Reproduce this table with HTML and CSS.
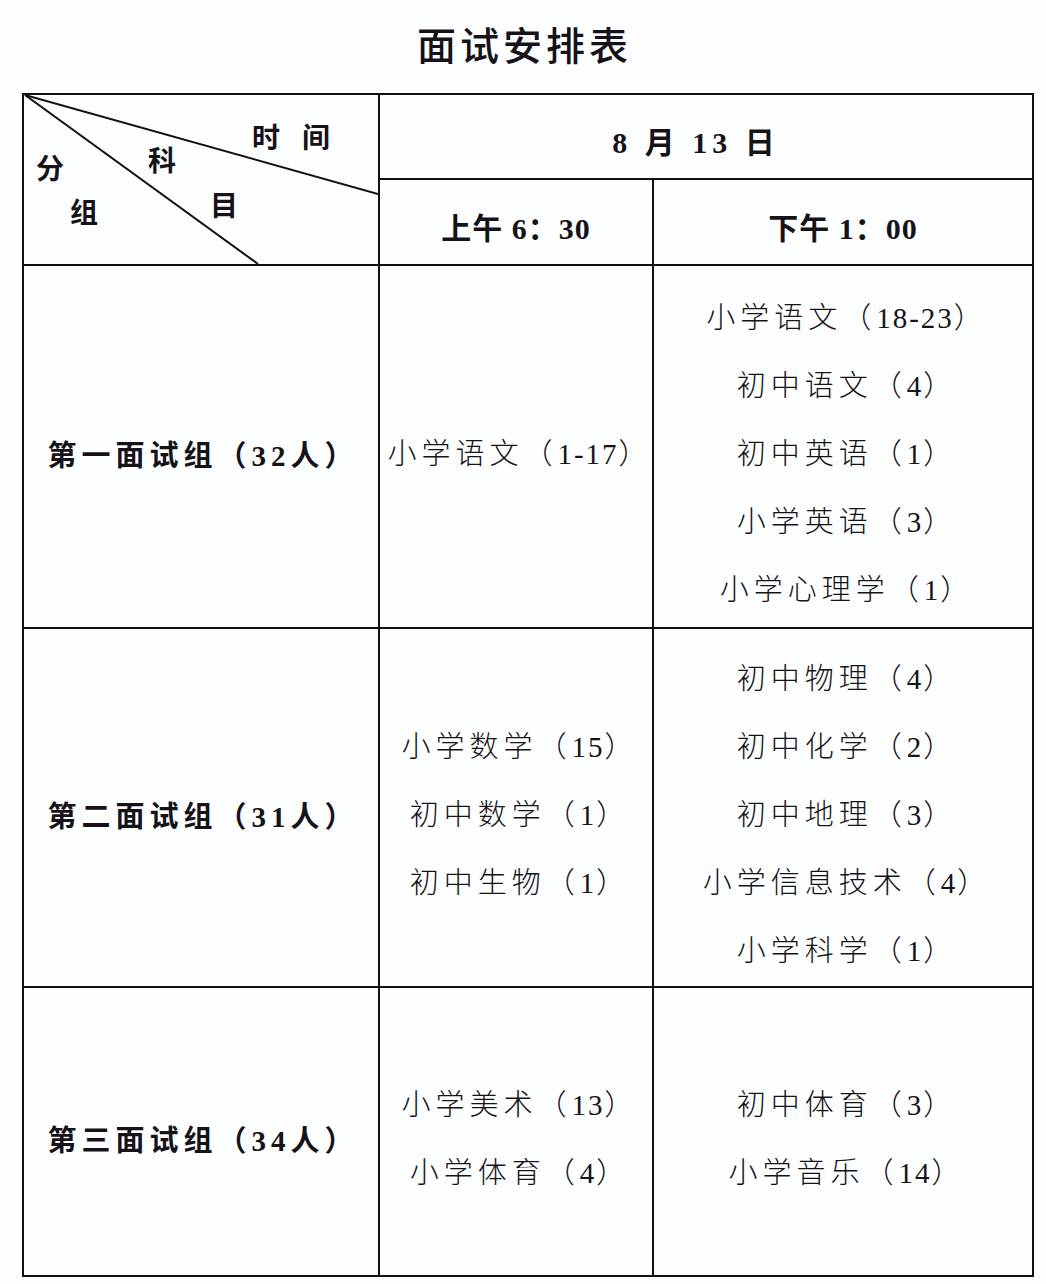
FILE: index.html
```html
<!DOCTYPE html>
<html lang="zh-CN">
<head>
<meta charset="utf-8">
<title>面试安排表</title>
<link rel="stylesheet" href="styles.css">
</head>
<body>
<h1 class="title">面试安排表</h1>
<div class="table">
  <div class="cell corner">
    <svg class="diag" viewBox="0 0 354 169" preserveAspectRatio="none" aria-hidden="true">
      <path d="M1 0 L354 99" />
      <path d="M1 0 L234 169" />
    </svg>
    <span class="hd hd-time">时间</span>
    <span class="hd hd-ke">科</span>
    <span class="hd hd-mu">目</span>
    <span class="hd hd-fen">分</span>
    <span class="hd hd-zu">组</span>
  </div>
  <div class="cell date">8 月 13 日</div>
  <div class="cell time">上午 6：30</div>
  <div class="cell time">下午 1：00</div>

  <div class="cell group">第一面试组（32人）</div>
  <div class="cell list">
    <p>小学语文（<span class="num">1-17</span>）</p>
  </div>
  <div class="cell list">
    <p>小学语文（<span class="num">18-23</span>）</p>
    <p>初中语文（<span class="num">4</span>）</p>
    <p>初中英语（<span class="num">1</span>）</p>
    <p>小学英语（<span class="num">3</span>）</p>
    <p>小学心理学（<span class="num">1</span>）</p>
  </div>

  <div class="cell group">第二面试组（31人）</div>
  <div class="cell list">
    <p>小学数学（<span class="num">15</span>）</p>
    <p>初中数学（<span class="num">1</span>）</p>
    <p>初中生物（<span class="num">1</span>）</p>
  </div>
  <div class="cell list">
    <p>初中物理（<span class="num">4</span>）</p>
    <p>初中化学（<span class="num">2</span>）</p>
    <p>初中地理（<span class="num">3</span>）</p>
    <p>小学信息技术（<span class="num">4</span>）</p>
    <p>小学科学（<span class="num">1</span>）</p>
  </div>

  <div class="cell group">第三面试组（34人）</div>
  <div class="cell list">
    <p>小学美术（<span class="num">13</span>）</p>
    <p>小学体育（<span class="num">4</span>）</p>
  </div>
  <div class="cell list">
    <p>初中体育（<span class="num">3</span>）</p>
    <p>小学音乐（<span class="num">14</span>）</p>
  </div>
</div>
</body>
</html>
```
FILE: styles.css
```css
html, body {
  margin: 0;
  padding: 0;
  background: #fdfeff;
}
body {
  width: 1046px;
  height: 1284px;
  color: #161318;
  font-family: "Liberation Serif", "Noto Sans CJK SC", serif;
}
.title {
  margin: 0;
  height: 93px;
  padding: 0 0 8px 3px;
  box-sizing: border-box;
  display: flex;
  align-items: center;
  justify-content: center;
  font-family: "Noto Sans CJK SC", sans-serif;
  font-weight: 500;
  font-size: 39px;
  letter-spacing: 4px;
}
.table {
  margin-left: 22px;
  width: 1012px;
  box-sizing: border-box;
  display: grid;
  grid-template-columns: 354px 272px 378px;
  grid-template-rows: 83px 84px 361px 357px 287px;
  gap: 2px;
  padding: 2px;
  background: #111;
}
.cell {
  background: #fdfeff;
  display: flex;
  flex-direction: column;
  align-items: center;
  justify-content: center;
}
.corner {
  grid-row: 1 / span 2;
  position: relative;
  display: block;
}
.diag {
  position: absolute;
  left: 0;
  top: 0;
  width: 100%;
  height: 100%;
}
.diag path {
  stroke: #111;
  stroke-width: 2;
  fill: none;
}
.hd {
  position: absolute;
  font-family: "Noto Sans CJK SC", sans-serif;
  font-weight: 700;
  font-size: 28px;
  line-height: 28px;
}
.hd-time { left: 228px; top: 27px; letter-spacing: 22px; }
.hd-ke { left: 124px; top: 50px; }
.hd-mu { left: 186px; top: 95px; }
.hd-fen { left: 12px; top: 58px; }
.hd-zu { left: 46px; top: 102px; }

.date {
  grid-column: 2 / span 2;
  font-weight: 700;
  font-size: 30px;
  letter-spacing: 5px;
  padding-top: 6px;
  padding-right: 20px;
  box-sizing: border-box;
}
.time {
  font-weight: 700;
  font-size: 30px;
  letter-spacing: 1px;
  padding-top: 8px;
  box-sizing: border-box;
}
.group {
  font-weight: 700;
  font-size: 29px;
  letter-spacing: 5px;
  padding: 12px 0 0 4px;
  box-sizing: border-box;
}
.list {
  font-weight: 300;
  font-size: 29px;
  letter-spacing: 5px;
  padding: 15px 0 0 8px;
  box-sizing: border-box;
}
.list p {
  margin: 0;
  line-height: 68px;
  white-space: nowrap;
}
.num {
  letter-spacing: 2px;
}
```
